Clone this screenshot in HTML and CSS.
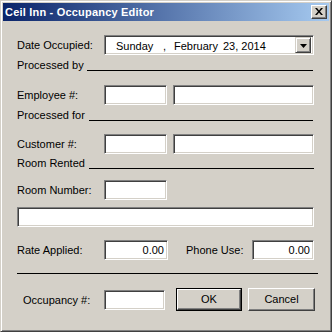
FILE: index.html
```html
<!DOCTYPE html>
<html>
<head>
<meta charset="utf-8">
<link rel="stylesheet" href="styles.css">
</head>
<body>
<div class="window">
  <div class="titlebar">
    <span class="title">Ceil Inn - Occupancy Editor</span>
    <span class="close"><svg width="8" height="7" viewBox="0 0 8 7"><path d="M0 0h2l2 2.5L6 0h2L5 3.5 8 7H6L4 4.5 2 7H0l3-3.5z" fill="#000"/></svg></span>
  </div>
  <div class="content">
    <div class="row r-date">
      <span class="lbl">Date Occupied:</span>
      <div class="combo">
        <div class="combo-text"><span class="d1">Sunday</span><span class="d2">,</span><span class="d3">February</span><span>23, 2014</span></div>
        <div class="drop"><svg width="7" height="4" viewBox="0 0 7 4"><path d="M0 0h7L3.5 4z" fill="#000"/></svg></div>
      </div>
    </div>
    <div class="group g1"><span>Processed by</span><div class="rule"></div></div>
    <div class="row r-emp">
      <span class="lbl">Employee #:</span>
      <div class="box w-short"></div>
      <div class="box w-long"></div>
    </div>
    <div class="group g2"><span>Processed for</span><div class="rule"></div></div>
    <div class="row r-cust">
      <span class="lbl">Customer #:</span>
      <div class="box w-short"></div>
      <div class="box w-long"></div>
    </div>
    <div class="group g3"><span>Room Rented</span><div class="rule"></div></div>
    <div class="row r-room">
      <span class="lbl">Room Number:</span>
      <div class="box w-short"></div>
    </div>
    <div class="row r-wide">
      <div class="box w-wide"></div>
    </div>
    <div class="row r-rate">
      <span class="lbl">Rate Applied:</span>
      <div class="box num w-rate">0.00</div>
      <span class="lbl lbl-phone">Phone Use:</span>
      <div class="box num w-phone">0.00</div>
    </div>
    <div class="sep"></div>
    <div class="row r-bottom">
      <span class="lbl lbl-occ">Occupancy #:</span>
      <div class="box w-occ"></div>
      <div class="btn btn-ok"><div class="btn-inner">OK</div></div>
      <div class="btn btn-cancel"><div class="btn-inner">Cancel</div></div>
    </div>
  </div>
</div>
</body>
</html>
```

FILE: styles.css
```css
body {
  margin: 0;
  font-family: "Liberation Sans", Arial, sans-serif;
  font-size: 11px;
  color: #000;
}
.window {
  width: 332px;
  height: 332px;
  box-sizing: border-box;
  background: #d4d0c8;
  border: 1px solid;
  border-color: #d4d0c8 #404040 #404040 #d4d0c8;
  box-shadow: inset 1px 1px #fff, inset -1px -1px #808080;
  padding: 2px;
}
.titlebar {
  height: 18px;
  display: flex;
  align-items: center;
  justify-content: space-between;
  background: linear-gradient(to right, #0a246a, #a6caf0);
  padding: 0 2px 0 2px;
}
.title {
  color: #fff;
  font-weight: bold;
  font-size: 11px;
  letter-spacing: 0.2px;
  line-height: 18px;
}
.close {
  width: 16px;
  height: 14px;
  box-sizing: border-box;
  background: #d4d0c8;
  border: 1px solid;
  border-color: #fff #404040 #404040 #fff;
  box-shadow: inset -1px -1px #808080;
  display: flex;
  align-items: center;
  justify-content: center;
  padding-right: 1px;
  padding-bottom: 1px;
}
.close svg { display: block; }
.content {
  display: flex;
  flex-direction: column;
  padding: 0 0 0 14px;
}
.row {
  display: flex;
  align-items: center;
  height: 20px;
}
.lbl {
  width: 87px;
  flex: none;
  white-space: nowrap;
}
.r-date { margin-top: 14px; }
.combo {
  width: 210px;
  height: 20px;
  box-sizing: border-box;
  background: #fff;
  border: 1px solid;
  border-color: #808080 #fff #fff #808080;
  box-shadow: inset 1px 1px #404040, inset -1px -1px #d4d0c8;
  padding: 1px;
  display: flex;
}
.combo-text {
  flex: 1;
  display: flex;
  align-items: center;
  padding-left: 10px;
  padding-top: 1px;
}
.d1 { width: 47px; }
.d2 { width: 11px; }
.d3 { width: 49px; }
.drop {
  width: 16px;
  height: 16px;
  box-sizing: border-box;
  margin-right: 1px;
  background: #d4d0c8;
  border: 1px solid;
  border-color: #d4d0c8 #404040 #404040 #d4d0c8;
  box-shadow: inset 1px 1px #fff, inset -1px -1px #808080;
  display: flex;
  align-items: center;
  justify-content: center;
  padding-top: 1px;
}
.drop svg { display: block; }
.group {
  display: flex;
  align-items: flex-start;
  height: 14px;
  line-height: 14px;
  width: 296px;
}
.group span { white-space: nowrap; }
.rule {
  flex: 1;
  height: 1px;
  background: #000;
  margin-top: 12px;
  margin-left: 3px;
}
.g1 { margin-top: 3px; }
.g2 { margin-top: 3px; }
.g2 .rule { margin-left: 4px; }
.g3 { margin-top: 2px; width: 297px; }
.g3 .rule { margin-left: 4px; }
.r-emp { margin-top: 13px; }
.r-cust { margin-top: 12px; }
.r-room { margin-top: 10px; }
.r-wide { margin-top: 7px; }
.r-rate { margin-top: 13px; }
.box {
  height: 20px;
  box-sizing: border-box;
  background: #fff;
  border: 1px solid;
  border-color: #808080 #fff #fff #808080;
  box-shadow: inset 1px 1px #404040, inset -1px -1px #d4d0c8;
  flex: none;
}
.num {
  text-align: right;
  padding: 0 3px 0 3px;
  line-height: 18px;
}
.w-short { width: 63px; }
.w-long { width: 141px; margin-left: 6px; }
.w-wide { width: 297px; }
.w-rate { width: 64px; }
.lbl-phone { width: 66px; margin-left: 18px; }
.w-phone { width: 62px; }
.sep {
  width: 301px;
  height: 1px;
  background: #000;
  margin-top: 13px;
}
.r-bottom {
  margin-top: 14px;
  height: 23px;
}
.lbl-occ { padding-left: 6px; width: 81px; }
.w-occ { width: 61px; }
.btn {
  height: 23px;
  box-sizing: border-box;
  flex: none;
  display: flex;
}
.btn-inner {
  flex: 1;
  display: flex;
  align-items: center;
  justify-content: center;
  background: #d4d0c8;
  border: 1px solid;
  border-color: #fff #404040 #404040 #fff;
  box-shadow: inset -1px -1px #808080;
  padding-bottom: 1px;
}
.btn-ok {
  width: 66px;
  margin-left: 11px;
  border: 1px solid #000;
}
.btn-cancel {
  width: 67px;
  margin-left: 6px;
}
.btn-cancel .btn-inner {
  box-shadow: inset -1px -1px #808080, inset 1px 1px #d4d0c8;
}
```
